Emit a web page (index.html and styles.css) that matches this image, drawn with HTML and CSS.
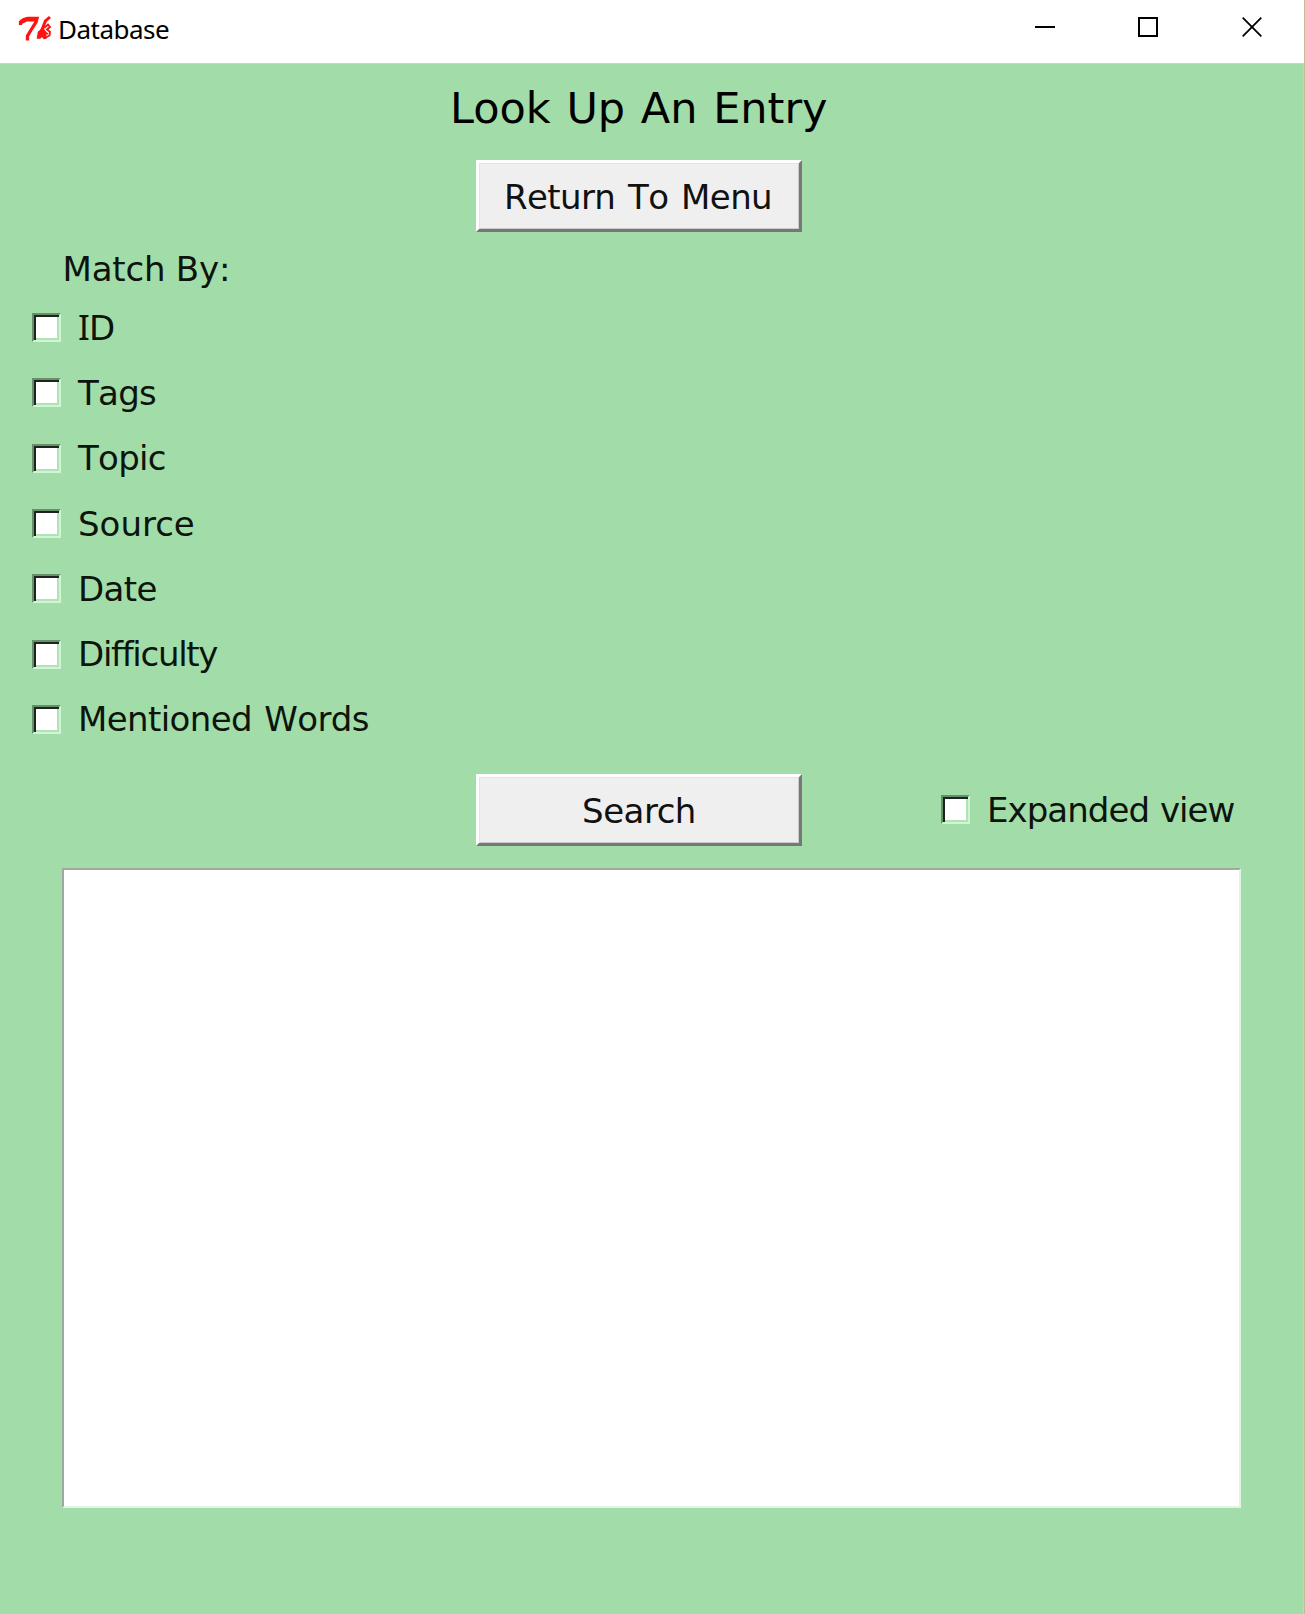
FILE: index.html
```html
<!DOCTYPE html>
<html lang="en">
<head>
<meta charset="utf-8">
<title>Database</title>
<link rel="stylesheet" href="styles.css">
</head>
<body>
<div class="window">
  <header class="titlebar">
    <svg class="logo" width="34" height="28" viewBox="0 0 34 28" fill="none" stroke="#ff1212">
      <path d="M2.500 10 V7 L6 4.500 L10 3.500 L19 3.500 L18 7 L13 15 L9.500 21 V25.500" stroke-width="3.300"/>
      <path d="M3 7 L8 4.500 H19" stroke-width="4.200"/>
      <path d="M32 2 L27.500 6 L25 12 L21 21" stroke-width="3"/>
      <path d="M19.500 23 L20.500 17 L25 14 L27.500 17 L28 23 L26 23.500 L24 21 L22 23 Z" fill="#ff1212" stroke-width="1.400"/>
      <path d="M26 13 L30 9.500 L32 12 L29 14.500 L32 17 L31.500 20.500 L27 23 M26 17 L30 19" stroke-width="1.900"/>
    </svg>
    <span class="caption">Database</span>
    <div class="controls">
      <svg width="20" height="20" viewBox="0 0 20 20"><path d="M0 10H20" stroke="#000" stroke-width="2"/></svg>
      <svg width="20" height="20" viewBox="0 0 20 20"><path d="M1 1H19V19H1Z" fill="none" stroke="#000" stroke-width="2"/></svg>
      <svg width="20" height="20" viewBox="0 0 20 20"><path d="M.7 .7L19.300 19.300M19.300 .7L.7 19.300" stroke="#000" stroke-width="1.800"/></svg>
    </div>
  </header>
  <main class="content">
    <h1 class="heading">Look Up An Entry</h1>
    <button class="button return">Return To Menu</button>
    <p class="match">Match By:</p>
    <div class="options">
      <label class="option"><span class="box"></span><span class="id"><span class="bar-i">I</span>D</span></label>
      <label class="option"><span class="box"></span><span class="tags">Tags</span></label>
      <label class="option"><span class="box"></span><span class="topic">Topic</span></label>
      <label class="option"><span class="box"></span><span class="source">Source</span></label>
      <label class="option"><span class="box"></span><span class="date">Date</span></label>
      <label class="option"><span class="box"></span><span class="difficulty">Difficulty</span></label>
      <label class="option"><span class="box"></span><span class="words">Mentioned Words</span></label>
    </div>
    <div class="actions">
      <button class="button search">Search</button>
      <label class="option expanded"><span class="box"></span><span>Expanded view</span></label>
    </div>
    <div class="results"></div>
  </main>
</div>
</body>
</html>
```
FILE: styles.css
```css
* { box-sizing: border-box; }
body { margin: 0; background: #a2dca8; }
.window {
  width: 1305px;
  height: 1614px;
  display: flex;
  flex-direction: column;
  border-right: 1px solid #c8b898;
  overflow: hidden;
  font-family: "DejaVu Sans", Verdana, sans-serif;
  font-size: 34px;
  color: #0c140d;
}
.titlebar {
  height: 63px;
  flex: none;
  display: flex;
  align-items: flex-start;
  background: #fff;
  padding-left: 18px;
}
.logo { margin-top: 15px; }
.caption {
  font: 26px/36px "Noto Sans", "Open Sans", sans-serif;
  color: #000;
  margin: 11px 0 0 6px;
  letter-spacing: -0.5px;
}
.controls { display: flex; gap: 83.5px; margin: 17px 42px 0 auto; }
.controls svg:nth-child(2) { margin-left: -0.5px; margin-right: 0.5px; }
.content {
  flex: 1;
  display: flex;
  flex-direction: column;
  background: #a2dca8;
  border-top: 1px solid #b5e2ba;
  border-right: 1px solid #b4dfb8;
}
.heading {
  margin: 0 0 6px 450px;
  width: 375px;
  height: 90px;
  font-size: 43px;
  line-height: 88px;
  font-weight: 400;
  color: #000;
  text-align: center;
  white-space: nowrap;
  letter-spacing: 0;
  word-spacing: 2px;
}
.button {
  width: 326px;
  height: 72px;
  margin: 0 0 0 476px;
  padding: 2px 0 0;
  font: inherit;
  color: #111;
  background: #efefef;
  border: 3px solid;
  border-color: #fff #777 #777 #fff;
  box-shadow: inset 1px 1px #e3e3e3, inset -1px -1px #cacaca;
  white-space: nowrap;
}
.return { padding-right: 2px; letter-spacing: -0.6px; word-spacing: 2.5px; font-kerning: none; }
.search { letter-spacing: -0.5px; }
.match { margin: 12px 0 1px 62.5px; height: 50px; line-height: 50px; letter-spacing: -0.2px; font-kerning: none; }
.options { display: flex; flex-direction: column; }
.option { height: 65.3px; display: flex; align-items: center; padding-left: 32px; line-height: 40px; white-space: nowrap; }
.box {
  width: 29px;
  height: 29px;
  flex: none;
  margin-right: 17px;
  background: #fff;
  border: 2px solid;
  border-color: #65906a #d0f5d4 #d0f5d4 #65906a;
  box-shadow: inset 2px 2px #1c251d, inset -2px -2px #b0e3b5;
}
.bar-i { font-family: "Noto Sans", sans-serif; font-size: 35px; }
.id { letter-spacing: -1px; }
.tags, .topic { font-kerning: none; letter-spacing: -0.7px; }
.date { letter-spacing: -0.6px; }
.difficulty { letter-spacing: -1.3px; }
.words { letter-spacing: -0.6px; word-spacing: 2px; font-kerning: none; }
.actions { display: flex; align-items: center; margin-top: 21px; height: 73px; }
.expanded { padding-left: 139px; letter-spacing: -0.95px; word-spacing: 1px; }
.results {
  width: 1179px;
  height: 640px;
  margin: 22px 0 0 62px;
  background: #fff;
  border: 2px solid;
  border-color: #a0a8a1 #e2f5e4 #e2f5e4 #a0a8a1;
}
```
